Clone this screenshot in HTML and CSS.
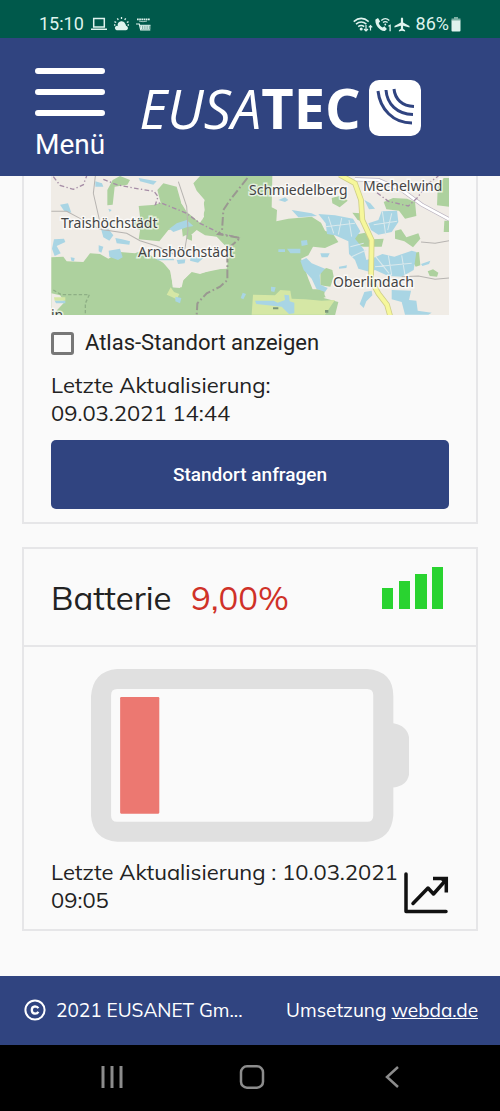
FILE: index.html
```html
<!DOCTYPE html>
<html lang="de">
<head>
<meta charset="utf-8">
<meta name="viewport" content="width=device-width, initial-scale=1">
<title>EUSATEC</title>
<link rel="stylesheet" href="styles.css">
</head>
<body>
<div class="status">
  <div class="status-group">
    <span>15:10</span>
    <svg viewBox="0 0 16 14" width="16" height="14" fill="none" stroke="#dff3ee" stroke-width="1.5"><path d="M2.7 1.5h10.6v8.4H2.7zM0 12.2h16"/></svg>
    <svg viewBox="0 0 15 14" width="15" height="14"><path fill="#dff3ee" d="M3.600 8a4 4 0 0 1 7.800-1l.6 2-4 1-4-.5z"/><path fill="#dff3ee" d="M2.600 13.200a2.300 2.300 0 0 1 .2-4.500c.8 0 1.200.2 1.700.6C5 8 6 7.600 7.200 8c.8-1.800 4.200-1.500 4.400.8 3 0 3.200 4.400.2 4.400z"/><path stroke="#dff3ee" stroke-width="1.300" d="M7.500 0v2M3.300 1.400l1 1.500M11.700 1.400l-1 1.500M.5 4.600l1.700.9M14.500 4.600l-1.700.9M0 8h1.400M13.600 8H15"/></svg>
    <svg viewBox="0 0 15 14" width="15" height="14" fill="none" stroke="#dff3ee"><path stroke-width="1.800" stroke-dasharray="1.700 .5" d="M1 2.300h13"/><path stroke-width=".7" d="M3 4.100q4 1.200 8 0"/><path stroke-width="1.200" d="M0 7h3.300l1.400 5.800h9.600"/><path stroke-width="3.600" stroke-dasharray="1.500 .4" d="M4.500 10.300h9.800"/><path d="M3.500 8.300h11"/></svg>
  </div>
  <div class="status-group status-right">
    <svg viewBox="0 0 20 15" width="20" height="15" fill="none" stroke="#dff3ee" stroke-width="1.500"><path d="M.7 4.600q7.500-6.500 15 0M3 7.200q5.200-4.300 10.400 0M5.200 9.700q3-2.200 6 0"/><circle cx="8.200" cy="12" r=".8" fill="#dff3ee"/><path stroke-width="1.200" d="M13 8v6M11 12l2 2 2-2M17.500 13.500v-5M15.800 10.300l1.700-1.800 1.700 1.800"/></svg>
    <svg viewBox="0 0 17 15" width="17" height="15"><path fill="#dff3ee" d="M.5 2.500 3 1l2.200 3.500-1.500 1.600c.8 2.200 2 3.500 4 4.500l1.700-1.300 2.500 2.800-2 1.800C4.500 14.500-.5 7 .5 2.500z"/><path fill="none" stroke="#dff3ee" stroke-width="1.300" d="M6.300 3.400q4-3.500 8 0M8 5.600q2.300-2 4.600 0M13.400 9.300l1.700-1v6"/><circle cx="10.300" cy="7.500" r=".9" fill="#dff3ee"/></svg>
    <svg viewBox="0 0 16 15" width="16" height="15"><path fill="#dff3ee" d="M6.900 1.400q1.100-2 2.200 0v4.100L15.500 9v1.600L9.100 8.800v3l2 1.500v1.200L8 13.700l-3.100.8v-1.200l2-1.500v-3L.5 10.600V9l6.400-3.500z"/></svg>
    <span class="status-percent">86%</span>
    <svg viewBox="0 0 10 15" width="10" height="15"><path fill="#7fb0a5" d="M3 0h4v1.500h2.500V4h-9V1.500H3z"/><path fill="#dff3ee" d="M.5 3.500h9v10q0 1-1 1h-7q-1 0-1-1z"/></svg>
  </div>
</div>

<header class="topbar">
  <button class="menu" type="button">
    <svg viewBox="0 0 70 50" width="70" height="50" stroke="#fff" stroke-width="6" stroke-linecap="round"><path d="M3 4h64M3 25h64M3 46h64"/></svg>
    <span>Menü</span>
  </button>
  <a class="logo" href="#">
    <span class="logo-text"><span class="logo-light">EUSA</span><span class="logo-bold">TEC</span></span>
    <svg viewBox="0 0 52 56" width="52" height="56"><rect width="52" height="56" rx="10" fill="#fff"/><path d="M9 11C11 29 24 43 43 43M17 10C18 24 28 34 44 34.500M25 9C26 19 33 26 45 26.500" fill="none" stroke="#304480" stroke-width="3"/></svg>
  </a>
</header>

<main class="content">
  <section class="card card-location">
    <svg class="map" viewBox="0 0 398 139" role="img" aria-label="Karte">
      <rect width="398" height="139" fill="#f0ece6"/>
      <g transform="translate(-11 -6) scale(.3334)">
        <path fill="#add19e" d="M34 262 70 260 80 274 130 276 150 250 180 252 205 266 240 246 285 250 310 240 340 262 370 278 390 302 400 352 425 352 430 330 455 306 480 312 520 298 560 296 565 260 560 232 530 200 495 196 470 180 440 206 432 232 425 170 385 180 358 214 296 208 300 180 270 168 300 140 296 108 345 104 362 98 352 60 370 40 410 50 424 100 440 126 480 158 492 140 488 112 494 90 470 62 460 40 480 18H640V436H34z"/>
        <path fill="#add19e" d="M202 60 218 30 240 18 270 30 262 44 224 50 218 104 202 106z"/>
        <path fill="#f0ece6" d="M410 40 424 84 424 100 470 150 486 150 494 120 490 90 466 60 458 40 478 18H415zM34 370 60 376 74 396 48 424 34 424zM340 250 436 196 520 200 560 232 565 264 556 294 480 310 456 304 428 332 420 354 398 352 392 300z"/>
        <path fill="#add19e" d="M440 190 456 196 456 212 440 206z"/>
        <path fill="#d5e7a5" d="M392 352 402 366 418 372 410 388 394 380 380 374zM42 382h34v10H44z"/>
        <path fill="#a9d5e4" d="M60 104 84 100 94 128 72 122zM184 180 206 178 220 196 208 212 190 202zM226 204 246 208 270 214 268 224 230 220zM42 208 72 206 76 216 50 228 62 250 44 258 36 236zM176 226 190 230 184 248 176 244zM206 242 240 236 248 262 234 270 208 260zM166 34 186 40 190 50 166 50zM296 24 350 34 340 44 300 34zM388 176 410 160 440 150 460 168 440 172 400 186zM410 270 436 268 434 280 414 282zM452 262 490 264 474 278 450 272zM350 266h52v5h-50zM406 380 424 384 420 400 406 394zM608 368l10 4-8 16-8-4zM92 262l12 2-2 10-8-2zM44 392h32v8H48zM205 116l10 4-6 6z"/>
        <g fill="none" stroke="#b7b4b1" stroke-width="3"><path d="M34 124H80L110 140 180 178 260 190 300 212 350 228 400 252M166 18 160 70 176 140 184 180M415 35 440 110 444 180 434 240"/></g>
        <g fill="none" stroke="#a68da6" stroke-width="4" stroke-dasharray="14 7 4 7"><path d="M40 20 60 46 100 58 130 44 140 18M190 28 230 44 280 54 342 64 354 80 346 104 362 98 440 130 480 160 540 190 600 204"/></g>
        <path fill="none" stroke="#9a9891" stroke-width="6" stroke-dasharray="26 8 5 8" d="M622 24 570 90 550 120 546 180 534 192 600 204 562 238 562 330 540 350 500 370 472 400 470 434"/>
        <path fill="none" stroke="#8eaf85" stroke-width="4" stroke-dasharray="10 6" d="M40 360 64 374H148L136 400V434"/>
      </g>
      <g transform="translate(194 -6) scale(.3334)">
        <path fill="#add19e" d="M22 18H612V436H22z"/>
        <path fill="#f0ece6" d="M82 18H612V436H270L280 396 236 384 240 360 206 366 190 326 176 286 168 266 190 256 204 230 240 234 280 216 264 192 240 182 228 158 200 140 130 146 94 154 96 120 80 112z"/>
        <path fill="#add19e" d="M260 84 290 76 308 92 284 112 262 100zM322 128 346 130 356 156 338 150zM322 196 360 188 384 208 416 206 410 230 356 230 326 226zM450 182 468 178 484 202 520 190 526 206 504 232 478 214 450 206zM416 96 444 84 486 86 510 96 514 138 480 146 462 122 424 118zM578 50 596 24H612V110L576 106zM598 152h14v34h-16zM506 248 522 246 526 286 512 290 502 272zM548 304l16-6 16 10-4 12-22-2zM226 304 244 294 262 300 266 320 256 350 226 346z"/>
        <path fill="#d5e7a5" d="M24 374 90 376 106 360 136 362 140 386 180 388 230 392 270 390 260 404 240 434H20z"/>
        <path fill="#add19e" d="M190 358 230 358 242 382 214 386 180 384z"/>
        <g fill="#a9d5e4"><path d="M220 132 270 136 324 146 346 184 330 206 356 238 364 270 390 262 412 252 448 260 500 242 514 246 506 300 470 320 430 318 390 300 376 306 340 296 330 270 312 252 310 214 270 196 246 192 242 160zM140 120 200 130 216 138 160 142zM370 160 400 150 410 124 456 122 460 156 440 186 400 194 378 180zM358 90 376 100 390 116 372 118zM166 272 184 264 200 280 240 296 224 314 226 344 248 354 240 366 214 356 200 326 176 300zM226 250 254 250 248 262 230 262zM168 212 186 210 188 224 170 228zM282 290 306 286 304 294 282 296zM528 282l28-10-4 10-20 6zM100 238h20v8h-20zM126 236h40v14h-30zM30 392H86L98 398 120 390 118 374 132 376 134 394 148 398 148 430 132 432 110 410 34 402zM440 360 498 362 492 390 514 392 518 422 560 428 550 434H480L470 396 440 388zM358 366 380 362 382 376 364 394 356 414 344 402zM100 90l20-8 10 8-10 6zM78 350l14 2-4 14-10-2z"/></g>
        <path fill="none" stroke="#dbe9ec" stroke-width="3" d="M250 140l16 50M290 144l-10 50M240 170l90-10M312 150l8 50M316 230l40-10M320 260l44-20M392 260l40 50M430 256l10 60M470 256l10 60M390 290l110-10M412 124l10 70M386 164l70-10M440 130l-12 50"/>
        <g fill="none" stroke="#b7b4b1" stroke-width="3"><path d="M528 216 570 220 612 212M470 320 520 318 570 328 612 324"/></g>
        <path fill="none" stroke="#b6afbd" stroke-width="12" d="M330 28 400 30 470 60 530 104 612 148"/>
        <path fill="none" stroke="#fff" stroke-width="8" d="M330 28 400 30 470 60 530 104 612 148"/>
        <path fill="none" stroke="#a68da6" stroke-width="4" stroke-dasharray="14 7 4 7" d="M396 68 430 94 490 108 516 84 550 40 580 18"/>
        <path fill="none" stroke="#cfcf88" stroke-width="17" d="M284 14 330 40 348 90 352 150 380 210 378 330 400 370 426 404 436 440"/>
        <path fill="none" stroke="#f6f79b" stroke-width="12" d="M284 14 330 40 348 90 352 150 380 210 378 330 400 370 426 404 436 440"/>
        <path fill="#7b967a" d="M84 412h16v6H84zM240 420h10v8h-10z"/>
      </g>
      <g class="map-label">
        <text x="10" y="52">Traishöchstädt</text>
        <text x="87" y="81">Arnshöchstädt</text>
        <text x="198" y="19">Schmiedelberg</text>
        <text x="312" y="15">Mechelwind</text>
        <text x="282" y="111">Oberlindach</text>
        <text x="0" y="144">in</text>
      </g>
    </svg>
    <label class="check"><input type="checkbox"><span>Atlas-Standort anzeigen</span></label>
    <p class="updated">Letzte Aktualisierung:<br>09.03.2021 14:44</p>
    <button class="primary" type="button">Standort anfragen</button>
  </section>

  <section class="card card-battery">
    <div class="card-head">
      <h2 class="card-title">Batterie <span class="level">9,00%</span></h2>
      <svg viewBox="0 0 62 42" width="62" height="42" fill="#29d330"><path d="M0 21h11v21H0zM17 14h11v28H17zM33 7h12v35H33zM50 0h11v42H50z"/></svg>
    </div>
    <div class="card-body">
      <svg class="battery" viewBox="0 0 317 172" role="img" aria-label="Batterie 9 %"><path fill="#e0e0e0" fill-rule="evenodd" d="M26 0H275Q301 2 301 27V54Q317 57 317 72V101Q317 116 301 118V146Q299 170 275 172H26Q2 170 0 146V27Q2 2 26 0zM26 20Q20 20 20 26V146Q20 152 26 152H275Q281 152 281 146V26Q281 20 275 20z"/><rect x="29" y="28" width="39" height="116" rx="1" fill="#ec7871"/></svg>
      <div class="battery-foot">
        <p class="updated">Letzte Aktualisierung : 10.03.2021 09:05</p>
        <button class="chart" type="button" aria-label="Verlauf"><svg viewBox="0 0 46 42" width="46" height="42" fill="none" stroke="#111" stroke-width="3.500" stroke-linejoin="round"><path stroke-linecap="round" d="M3 2V39.500H43M10 31.500 25 16l5.500 6L42 9"/><path stroke-linejoin="miter" d="M30 6.500H43.300V20.500"/><path fill="#111" stroke="none" d="M36 6h8v8z"/></svg></button>
      </div>
    </div>
  </section>
</main>

<footer class="footer">
  <span class="copyright">
    <svg viewBox="0 0 22 22" width="22" height="22" fill="none" stroke="#fff" stroke-width="2"><circle cx="11" cy="11" r="9.600"/><path stroke-width="2.300" d="M14.300 9.200Q13.500 7.300 11 7.300 7.800 7.500 7.800 11T11 14.700Q13.500 14.700 14.300 12.800"/></svg>
    <span>2021 EUSANET Gm...</span>
  </span>
  <span>Umsetzung <a href="#">webda.de</a></span>
</footer>

<nav class="system">
  <button type="button" aria-label="Letzte Apps"><svg viewBox="0 0 24 24" width="24" height="24" stroke="#8c8c8c" stroke-width="3"><path d="M3 1v22M12 1v22M21 1v22"/></svg></button>
  <button type="button" aria-label="Startseite"><svg viewBox="0 0 26 24" width="26" height="24" fill="none" stroke="#8c8c8c" stroke-width="2.500"><rect x="2" y="1.300" width="22" height="21.400" rx="6"/></svg></button>
  <button type="button" aria-label="Zurück"><svg viewBox="0 0 24 24" width="24" height="24" fill="none" stroke="#8c8c8c" stroke-width="2.500"><path d="M18 2 7 12l11 10"/></svg></button>
</nav>
</body>
</html>
```
FILE: styles.css
```css
* {
  box-sizing: border-box;
}

body {
  margin: 0;
  min-height: 100vh;
  display: flex;
  flex-direction: column;
  background: #fafafa;
  color: #222;
  font-family: Muli, Mulish, Lato, sans-serif;
  font-size: 22px;
  line-height: 28px;
}

button {
  border: 0;
  padding: 0;
  background: none;
  color: inherit;
  cursor: pointer;
}

svg {
  display: block;
  flex: none;
}

.status {
  display: flex;
  justify-content: space-between;
  padding: 10px 39px 0;
  background: #00594b;
  color: #dff3ee;
  font-family: Roboto, sans-serif;
  font-size: 18px;
}

.status-group {
  display: flex;
  align-items: center;
  gap: 7px;
}

.status-right {
  gap: 2px;
}

.status-percent {
  padding-left: 4px;
}

.topbar {
  display: flex;
  align-items: flex-start;
  gap: 34px;
  padding: 29px 35px 15px;
  background: #304480;
  color: #fff;
}

.menu {
  display: flex;
  flex-direction: column;
  align-items: center;
  gap: 12px;
  font-family: Roboto, sans-serif;
  font-size: 28px;
  line-height: 32px;
}

.logo {
  display: flex;
  align-items: center;
  gap: 8px;
  padding-top: 12px;
  color: #fff;
  text-decoration: none;
}

.logo-text {
  display: flex;
  align-items: baseline;
  font-family: "Open Sans", sans-serif;
  font-size: 56px;
  line-height: 56px;
}

.logo-light {
  font-size: 54px;
  font-style: italic;
  font-weight: 500;
}

.logo-bold {
  font-weight: 700;
}

.content {
  flex: 1;
  display: flex;
  flex-direction: column;
  gap: 23px;
  padding: 0 22px 44px;
}

.card {
  border: 2px solid #e6e6e8;
}

.card-location {
  display: flex;
  flex-direction: column;
  border-top: 0;
  padding: 0 27px 13px;
}

.map {
  width: 100%;
  height: auto;
}

.map-label {
  font-family: "Noto Sans", sans-serif;
  font-size: 14px;
  fill: #444;
  stroke: #fff;
  stroke-width: 3px;
  stroke-opacity: .7;
  paint-order: stroke;
}

.check {
  display: flex;
  align-items: center;
  gap: 11px;
  padding: 14px 0;
  font-family: Roboto, sans-serif;
}

.check input {
  appearance: none;
  width: 23px;
  height: 23px;
  margin: 0;
  border: 3px solid #777;
  border-radius: 3px;
}

.updated {
  margin: 0;
}

.primary {
  margin-top: 13px;
  padding: 20px;
  border-radius: 5px;
  background: #304480;
  color: #fff;
  font: 500 19px/29px Roboto, sans-serif;
}

.card-head {
  display: flex;
  justify-content: space-between;
  align-items: flex-start;
  padding: 18px 32px 33px 27px;
  border-bottom: 2px solid #e6e6e8;
}

.card-title {
  margin: 0;
  padding-top: 17px;
  font-size: 33px;
  line-height: 28px;
  font-weight: 400;
}

.level {
  padding-left: 11px;
  color: #cf3128;
}

.card-body {
  padding: 22px 27px 15px;
}

.battery {
  width: 80%;
  height: auto;
  margin: 0 auto;
}

.battery-foot {
  display: flex;
  align-items: flex-end;
  padding-top: 16px;
}

.battery-foot .updated {
  flex: 1;
}

.footer {
  display: flex;
  justify-content: space-between;
  align-items: center;
  padding: 20px 22px 21px 24px;
  background: #304480;
  color: #fff;
  font-size: 19px;
}

.footer a {
  color: #fff;
}

.copyright {
  display: flex;
  align-items: center;
  gap: 10px;
}

.system {
  display: flex;
  justify-content: space-between;
  padding: 20px 96px 22px 100px;
  background: #000;
}
```
